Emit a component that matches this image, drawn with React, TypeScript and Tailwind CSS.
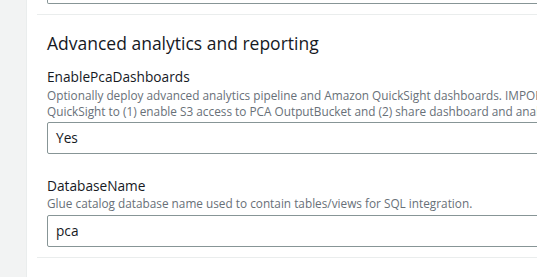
import React from "react";

export default function App() {
  const font = { fontFamily: '"Open Sans", "Noto Sans", Arial, sans-serif' };
  return (
    <div className="flex h-[277px] w-[537px] overflow-hidden bg-[#f2f3f3]" style={font}>
      <div className="w-[27px] shrink-0 border-r border-[#eaeded] bg-[#f2f3f3]" />
      <div className="flex-1 overflow-hidden bg-white">
        <div className="w-[700px]">
          <div className="ml-[20px] h-[4px] rounded-b-[2px] border-x border-b border-[#879596]" />
          <div className="ml-[10px] mt-[10px] border-t border-[#eaeded] pl-[10px]">
            <h2 className="pt-[16px] text-[17.5px] leading-[24px] text-[#16191f]">
              Advanced analytics and reporting
            </h2>
            <div className="mt-[12px]">
              <div className="text-[13.7px] leading-[20px] text-[#16191f]">EnablePcaDashboards</div>
              <div className="text-[11.8px] leading-[16px] text-[#687078]">
                <div className="whitespace-nowrap">
                  Optionally deploy advanced analytics pipeline and Amazon QuickSight dashboards. IMPORTANT: Before setting to Yes, you must manually configure
                </div>
                <div className="whitespace-nowrap">
                  QuickSight to (1) enable S3 access to PCA OutputBucket and (2) share dashboard and analysis with your QuickSight user.
                </div>
              </div>
              <div className="mt-[3px] flex h-[32px] items-center rounded-[2px] border border-[#879596] px-[8px] text-[13.7px] text-[#16191f]">
                Yes
              </div>
            </div>
            <div className="mt-[23px]">
              <div className="text-[13.7px] leading-[18px] text-[#16191f]">DatabaseName</div>
              <div className="whitespace-nowrap text-[11.8px] leading-[16px] text-[#687078]">
                Glue catalog database name used to contain tables/views for SQL integration.
              </div>
              <div className="mt-[4px] flex h-[32px] items-center rounded-[2px] border border-[#879596] px-[8px] text-[13.7px] text-[#16191f]">
                pca
              </div>
            </div>
          </div>
          <div className="ml-[10px] mt-[10px] h-[40px] border-t border-[#eaeded]" />
        </div>
      </div>
    </div>
  );
}
